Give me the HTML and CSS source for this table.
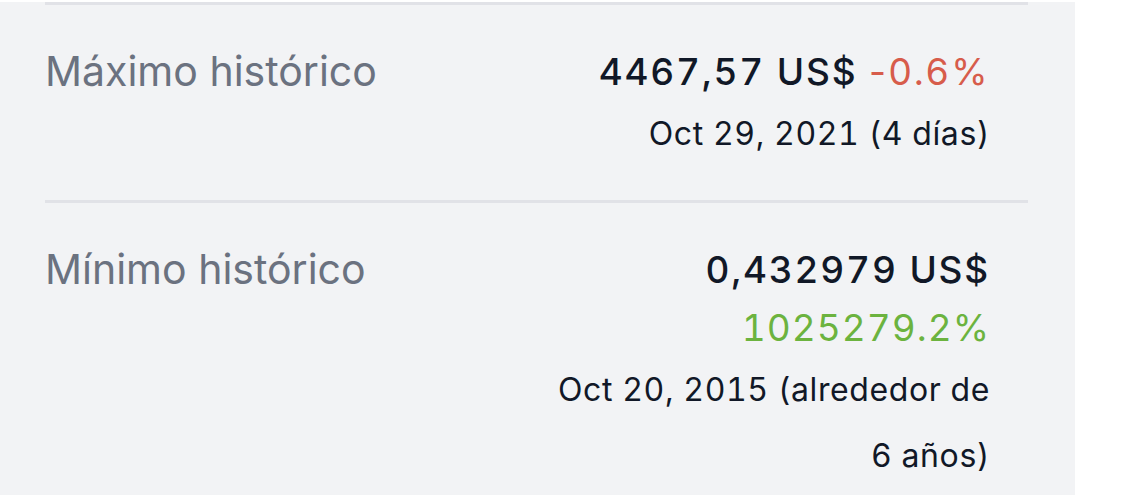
FILE: index.html
```html
<!DOCTYPE html>
<html lang="es">
<head>
  <meta charset="UTF-8">
  <meta name="viewport" content="width=device-width, initial-scale=1.0">
  <title>Estadísticas de precio</title>
  <link rel="stylesheet" href="styles.css">
</head>
<body>
  <div class="panel">
    <!-- Máximo histórico -->
    <div class="stat-row">
      <div class="stat-label">Máximo histórico</div>
      <div class="stat-value">
        <div class="price">4467,57 US$ <span class="change down">-0.6%</span></div>
        <div class="date">Oct 29, 2021 (4 días)</div>
      </div>
    </div>

    <!-- Mínimo histórico -->
    <div class="stat-row">
      <div class="stat-label">Mínimo histórico</div>
      <div class="stat-value">
        <div class="price">0,432979 US$</div>
        <div class="price"><span class="change up">1025279.2%</span></div>
        <div class="date">Oct 20, 2015 (alrededor de 6 años)</div>
      </div>
    </div>
  </div>
</body>
</html>
```

FILE: styles.css
```css
body {
  margin: 0;
  background: #ffffff;
  font-family: Inter, "Noto Sans", sans-serif;
  height: 495px;
  overflow: hidden;
}
.panel {
  width: 1075px;
  min-height: 495px;
  background: #f2f3f5;
  padding-left: 45px;
  box-sizing: border-box;
}
.stat-row {
  width: 983px;
  box-sizing: border-box;
  display: flex;
  justify-content: space-between;
  align-items: flex-start;
  border-top: 3px solid #e1e2e7;
  padding: 38px 38px 33px 0;
}
.stat-row:first-child {
  margin-top: 2px;
}
.stat-label {
  font-size: 41px;
  line-height: 56px;
  color: #6b7280;
}
.stat-value {
  text-align: right;
  max-width: 450px;
  color: #111827;
}
.price {
  font-size: 37px;
  line-height: 58px;
  font-weight: 500;
  font-variant-numeric: tabular-nums;
  letter-spacing: 1.8px;
}
.change {
  font-weight: 400;
}
.down {
  color: #d75c4b;
  font-variant-numeric: normal;
  letter-spacing: 2.5px;
}
.up {
  color: #6cb33f;
  letter-spacing: 1px;
}
.date {
  font-size: 32px;
  line-height: 66px;
  font-variant-numeric: tabular-nums;
  letter-spacing: 0.6px;
}
```
